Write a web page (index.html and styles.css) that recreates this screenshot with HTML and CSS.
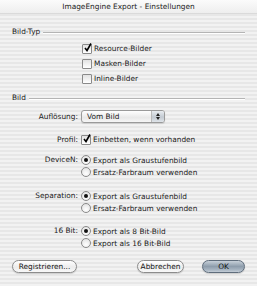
FILE: index.html
```html
<!doctype html>
<html>
<head>
<meta charset="utf-8">
<link rel="stylesheet" href="styles.css">
<title>ImageEngine Export - Einstellungen</title>
</head>
<body>
<div class="window">
  <div class="titlebar">ImageEngine Export - Einstellungen</div>

  <div class="content">
    <div class="group-head"><span>Bild-Typ</span><i class="rule"></i></div>

    <div class="checklist">
      <label class="check on"><span class="box"></span>Resource-Bilder</label>
      <label class="check"><span class="box"></span>Masken-Bilder</label>
      <label class="check"><span class="box"></span>Inline-Bilder</label>
    </div>

    <div class="group-head head-bild"><span>Bild</span><i class="rule"></i></div>

    <div class="form">
      <div class="row row-popup">
        <div class="label">Auflösung:</div>
        <div class="popup"><span class="popup-text">Vom Bild</span><span class="popup-arrows"></span></div>
      </div>

      <div class="row row-profil">
        <div class="label">Profil:</div>
        <label class="check on"><span class="box"></span>Einbetten, wenn vorhanden</label>
      </div>

      <div class="row row-device">
        <div class="label">DeviceN:</div>
        <div class="radios">
          <label class="radio on"><span class="dot"></span>Export als Graustufenbild</label>
          <label class="radio"><span class="dot"></span>Ersatz-Farbraum verwenden</label>
        </div>
      </div>

      <div class="row row-sep">
        <div class="label">Separation:</div>
        <div class="radios">
          <label class="radio on"><span class="dot"></span>Export als Graustufenbild</label>
          <label class="radio"><span class="dot"></span>Ersatz-Farbraum verwenden</label>
        </div>
      </div>

      <div class="row row-bit">
        <div class="label">16 Bit:</div>
        <div class="radios">
          <label class="radio on"><span class="dot"></span>Export als 8 Bit-Bild</label>
          <label class="radio"><span class="dot"></span>Export als 16 Bit-Bild</label>
        </div>
      </div>
    </div>

    <div class="buttons">
      <button class="btn btn-reg">Registrieren...</button>
      <span class="spacer"></span>
      <button class="btn btn-cancel">Abbrechen</button>
      <button class="btn btn-ok">OK</button>
    </div>
  </div>
</div>
</body>
</html>
```

FILE: styles.css
```css
html,
body {
    margin: 0;
    padding: 0;
}
body {
    font-family: "DejaVu Sans", "Liberation Sans", sans-serif;
    font-size: 7.4px;
    color: #1a1a1a;
}
.window {
    width: 257px;
    height: 286px;
    overflow: hidden;
    background: repeating-linear-gradient(to bottom, #f2f2f2 0, #f2f2f2 2px, #e7e7e7 2px, #e7e7e7 4px);
}
.titlebar {
    height: 14px;
    line-height: 13px;
    text-align: center;
    color: #222;
    background: linear-gradient(to bottom, #fbfbfb, #eeeeee);
    border-bottom: 1px solid #dadada;
    box-sizing: border-box;
}
.content {
    padding: 0 12px;
}
.group-head {
    display: flex;
    align-items: center;
    height: 11px;
    line-height: 11px;
    margin-top: 12px;
}
.group-head span {
    margin-right: 3px;
}
.group-head .rule {
    flex: 1;
    height: 0;
    border-top: 1px solid #b4b4b4;
    border-bottom: 1px solid #fff;
    margin-top: 2px;
}
.head-bild {
    margin-top: 6px;
}
.checklist {
    display: flex;
    flex-direction: column;
    padding-left: 70px;
    margin-top: 4px;
}
.checklist .check {
    height: 15px;
}
.check,
.radio {
    display: flex;
    align-items: center;
    height: 11px;
    line-height: 11px;
    white-space: nowrap;
}
.box {
    position: relative;
    width: 10px;
    height: 10px;
    margin-right: 2px;
    border: 1px solid #8a8a8a;
    border-radius: 1px;
    box-sizing: border-box;
    background: linear-gradient(to bottom, #e2e2e2, #fff);
}
.check.on .box::after {
    content: "";
    position: absolute;
    left: 1px;
    top: -2px;
    width: 8px;
    height: 9px;
    background: url("data:image/svg+xml;utf8,<svg xmlns='http://www.w3.org/2000/svg' width='8' height='9' viewBox='0 0 8 9'><path d='M1 5 L3 7.5 L7 0.5' fill='none' stroke='%23000' stroke-width='1.6'/></svg>") no-repeat;
}
.dot {
    position: relative;
    width: 10px;
    height: 10px;
    margin-right: 2px;
    border: 1px solid #8a8a8a;
    border-radius: 50%;
    box-sizing: border-box;
    background: radial-gradient(circle at 50% 70%, #fff, #dedede);
}
.radio.on .dot::after {
    content: "";
    position: absolute;
    left: 2px;
    top: 2px;
    width: 4px;
    height: 4px;
    border-radius: 50%;
    background: #111;
}
.form {
    display: flex;
    flex-direction: column;
}
.row {
    display: grid;
    grid-template-columns: 66px auto;
    column-gap: 3px;
    align-items: start;
}
.label {
    text-align: right;
    height: 12px;
    line-height: 12px;
    white-space: nowrap;
}
.row-popup {
    margin-top: 7px;
    align-items: center;
}
.row-profil {
    margin-top: 11px;
}
.row-profil .label {
    height: 11px;
    line-height: 11px;
}
.row-device {
    margin-top: 9px;
}
.row-sep {
    margin-top: 12px;
}
.row-bit {
    margin-top: 11px;
}
.radios {
    display: flex;
    flex-direction: column;
}
.radios .radio {
    height: 12px;
}
.popup {
    display: flex;
    width: 84px;
    height: 13px;
    border: 1px solid #9a9a9a;
    border-radius: 3px;
    box-sizing: border-box;
    overflow: hidden;
    background: linear-gradient(to bottom, #ffffff, #e9e9e9 60%, #f6f6f6);
    box-shadow: 0 1px 1px rgba(0, 0, 0, 0.12);
}
.popup-text {
    flex: 1;
    padding-left: 5px;
    line-height: 11px;
}
.popup-arrows {
    position: relative;
    width: 12px;
    border-left: 1px solid #b9b9b9;
    background: linear-gradient(to bottom, #e8ecf0, #c3cad2 55%, #dfe4e9);
}
.popup-arrows::before,
.popup-arrows::after {
    content: "";
    position: absolute;
    left: 4px;
    border-left: 2px solid transparent;
    border-right: 2px solid transparent;
}
.popup-arrows::before {
    top: 2px;
    border-bottom: 3px solid #222;
}
.popup-arrows::after {
    bottom: 2px;
    border-top: 3px solid #222;
}
.buttons {
    display: flex;
    align-items: center;
    margin-top: 11px;
}
.spacer {
    flex: 1;
}
.btn {
    height: 13px;
    padding: 0;
    font-family: inherit;
    font-size: 7.4px;
    line-height: 11px;
    text-align: center;
    white-space: nowrap;
    color: #111;
    border: 1px solid #8c8c8c;
    border-radius: 7px;
    background: linear-gradient(to bottom, #ffffff, #ececec 55%, #f8f8f8);
    box-shadow: 0 1px 1px rgba(0, 0, 0, 0.15);
}
.btn-reg {
    width: 65px;
}
.btn-cancel {
    width: 47px;
    margin-right: 18px;
}
.btn-ok {
    width: 43px;
    border-color: #5f6d7c;
    background: linear-gradient(to bottom, #c7d0d9, #8e9dac 50%, #a8b5c2 80%, #c3ccd6);
}
```
